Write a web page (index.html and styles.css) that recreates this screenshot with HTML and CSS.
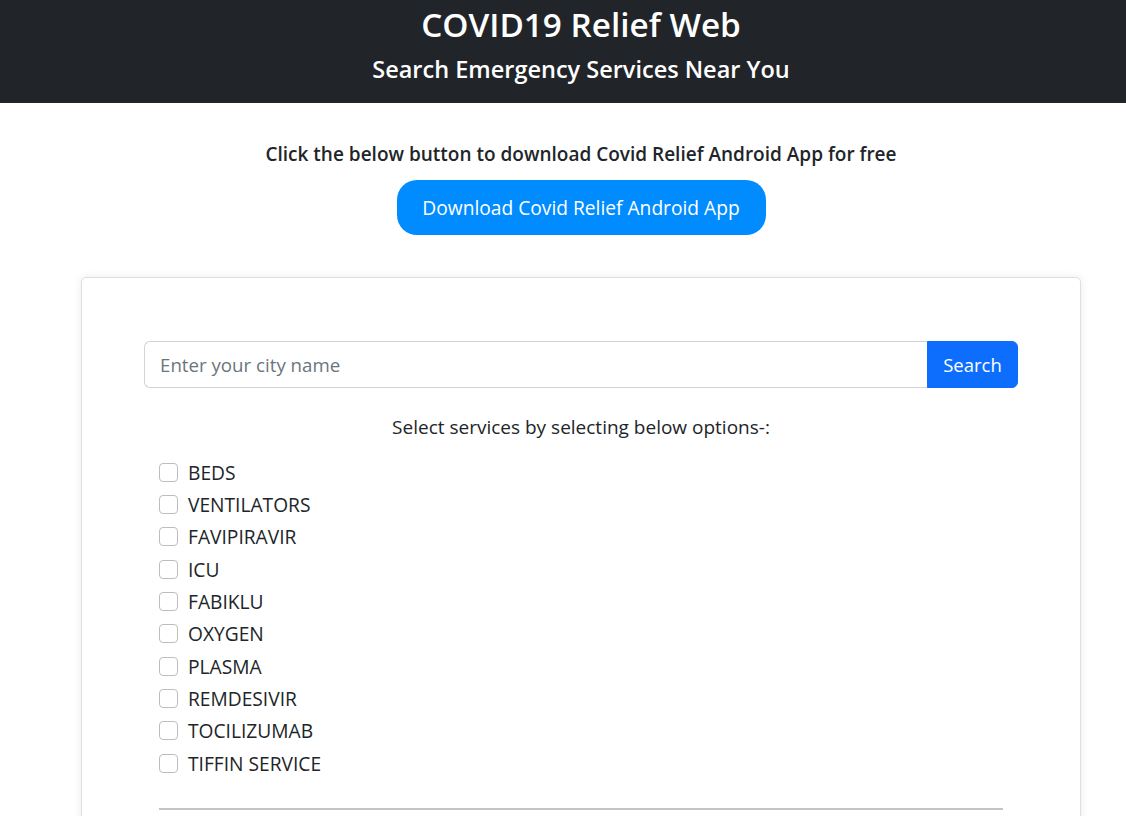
FILE: index.html
```html
<!DOCTYPE html>
<html>
<head>
<meta charset="utf-8">
<link rel="stylesheet" href="styles.css">
</head>
<body>
<div class="page">
  <header class="top">
    <h1 class="title">COVID19 Relief Web</h1>
    <h2 class="subtitle">Search Emergency Services Near You</h2>
  </header>
  <section class="app">
    <p class="app-text">Click the below button to download Covid Relief Android App for free</p>
    <a class="app-btn" href="#">Download Covid Relief Android App</a>
  </section>
  <div class="card">
    <div class="search">
      <input class="search-input" type="text" placeholder="Enter your city name">
      <button class="search-btn">Search</button>
    </div>
    <p class="select-text">Select services by selecting below options-:</p>
    <ul class="options">
      <li><span class="box"></span>BEDS</li>
      <li><span class="box"></span>VENTILATORS</li>
      <li><span class="box"></span>FAVIPIRAVIR</li>
      <li><span class="box"></span>ICU</li>
      <li><span class="box"></span>FABIKLU</li>
      <li><span class="box"></span>OXYGEN</li>
      <li><span class="box"></span>PLASMA</li>
      <li><span class="box"></span>REMDESIVIR</li>
      <li><span class="box"></span>TOCILIZUMAB</li>
      <li><span class="box"></span>TIFFIN SERVICE</li>
    </ul>
    <hr class="divider">
  </div>
</div>
</body>
</html>
```
FILE: styles.css
```css
html, body { margin: 0; padding: 0; }
body {
  font-family: "Open Sans", "Noto Sans", sans-serif;
  color: #212529;
  background: #fff;
  overflow: hidden;
}
.page { width: 1162px; }
.top {
  background: #212529;
  color: #fff;
  height: 103px;
  box-sizing: border-box;
  padding-top: 2px;
  text-align: center;
}
.title {
  margin: 0;
  font-size: 33.3px;
  font-weight: 600;
  line-height: 44px;
}
.subtitle {
  margin: 0;
  font-size: 23.5px;
  font-weight: 600;
  line-height: 46px;
}
.app { text-align: center; padding-top: 38px; }
.app-text {
  margin: 0 0 13px;
  font-size: 19px;
  font-weight: 600;
  line-height: 26px;
}
.app-btn {
  display: inline-block;
  background: #008cff;
  color: #fff;
  text-decoration: none;
  font-size: 19.2px;
  line-height: 55px;
  height: 55px;
  width: 369px;
  border-radius: 20px;
}
.card {
  margin: 42px 81px 0;
  border: 1px solid #dfdfdf;
  border-radius: 5px;
  box-shadow: 0 0 8px rgba(0,0,0,0.08);
  padding: 63px 62px 40px;
  height: 600px;
}
.search { display: flex; height: 47px; }
.search-input {
  flex: 1;
  border: 1px solid #ced4da;
  border-right: none;
  border-radius: 6px 0 0 6px;
  padding: 0 15px;
  font-family: inherit;
  font-size: 18.7px;
  color: #212529;
  outline: none;
}
.search-input::placeholder { color: #6c757d; }
.search-btn {
  width: 91px;
  background: #0d6efd;
  color: #fff;
  border: 1px solid #0d6efd;
  border-radius: 0 6px 6px 0;
  font-family: inherit;
  font-size: 18.5px;
  padding: 0;
}
.select-text {
  text-align: center;
  margin: 26px 0 16px;
  font-size: 19px;
  line-height: 26px;
}
.options { list-style: none; margin: 0; padding: 0 0 0 15px; }
.options li {
  display: flex;
  align-items: center;
  height: 32.35px;
  font-size: 19.2px;
}
.box {
  width: 17px;
  height: 17px;
  border: 1px solid #bdbdbd;
  border-radius: 4px;
  margin-right: 10px;
}
.divider {
  margin: 29px 15px 0;
  border: none;
  border-top: 2px solid #c4c4c4;
}
```
